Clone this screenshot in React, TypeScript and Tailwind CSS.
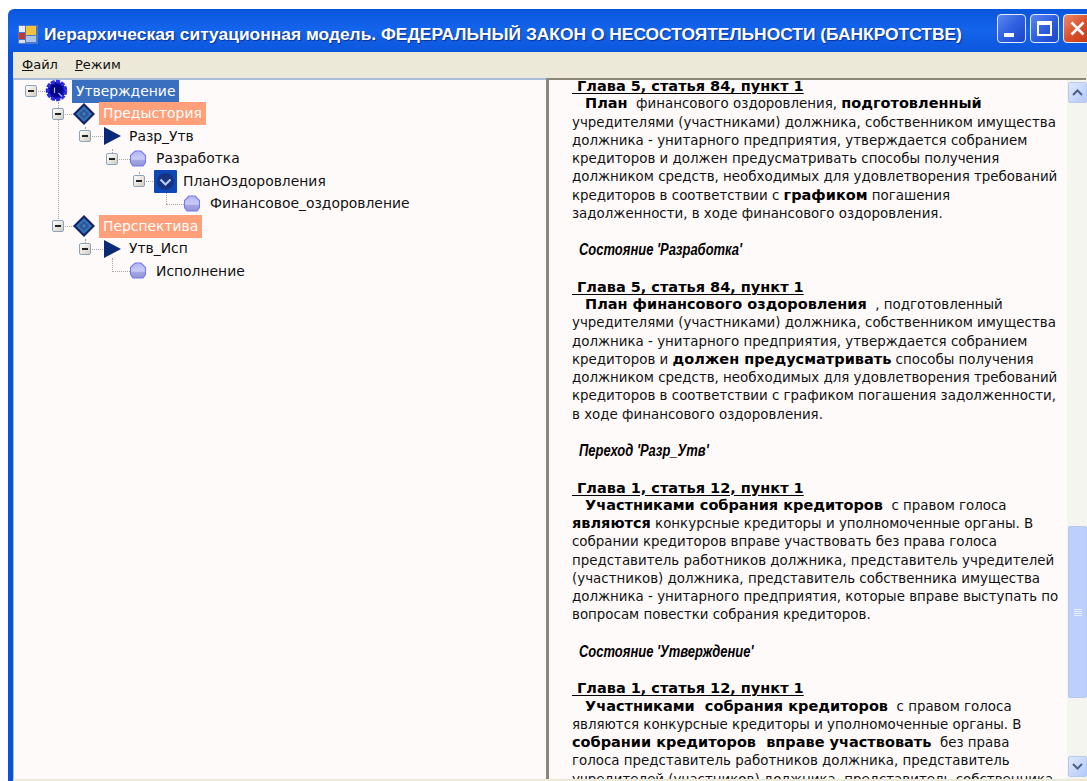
import type { ReactNode } from 'react'

type NodeKind = 'root' | 'diamond' | 'play' | 'ball' | 'chevron'

type TreeNode = {
  label: string
  kind: NodeKind
  tag?: 'selected' | 'peach'
  up?: number
  children?: TreeNode[]
}

const TREE: TreeNode = {
  label: 'Утверждение',
  kind: 'root',
  tag: 'selected',
  children: [
    {
      label: 'Предыстория',
      kind: 'diamond',
      tag: 'peach',
      up: 12,
      children: [
        {
          label: 'Разр_Утв',
          kind: 'play',
          up: 10,
          children: [
            {
              label: 'Разработка',
              kind: 'ball',
              up: 10,
              children: [
                {
                  label: 'ПланОздоровления',
                  kind: 'chevron',
                  up: 10,
                  children: [{ label: 'Финансовое_оздоровление', kind: 'ball', up: 14 }],
                },
              ],
            },
          ],
        },
      ],
    },
    {
      label: 'Перспектива',
      kind: 'diamond',
      tag: 'peach',
      up: 112,
      children: [
        {
          label: 'Утв_Исп',
          kind: 'play',
          up: 10,
          children: [{ label: 'Исполнение', kind: 'ball', up: 14 }],
        },
      ],
    },
  ],
}

function NodeIcon({ kind }: { kind: NodeKind }) {
  if (kind === 'root') {
    return (
      <svg width="24" height="24" viewBox="0 0 24 24">
        <circle cx="11.500" cy="11.500" r="9" fill="#0808b0" stroke="#2c2cdc" strokeWidth="3.500" strokeDasharray="4 1.200" />
        <circle cx="11" cy="11" r="6" fill="#04047e" />
        <path d="M9.500 8.500v5.500M13.500 14l3.500 3.500" stroke="#aebcf0" strokeWidth="1.200" fill="none" />
      </svg>
    )
  }
  if (kind === 'diamond') {
    return (
      <svg width="24" height="24" viewBox="0 0 24 24">
        <path d="M12 1l11 11-11 11L1 12z" fill="#16206c" />
        <path d="M12 4l8 8-8 8-8-8z" fill="#2d78ae" />
        <path d="M12 7l5 5-5 5-5-5z" fill="#35509f" />
        <path d="M12 10l2 2-2 2-2-2z" fill="#3a86b8" />
      </svg>
    )
  }
  if (kind === 'play') {
    return (
      <svg width="24" height="18" viewBox="0 0 24 18">
        <path d="M5 0l17 9-17 9z" fill="#0a2a78" />
      </svg>
    )
  }
  if (kind === 'ball') {
    return (
      <svg width="18" height="18" viewBox="0 0 18 18">
        <defs>
          <linearGradient id="ball-shade" x1="0" y1="0" x2="0" y2="1">
            <stop offset="0" stopColor="#b4b7f2" />
            <stop offset="0.55" stopColor="#c9cbf6" />
            <stop offset="0.62" stopColor="#a2a6e2" />
            <stop offset="1" stopColor="#9296da" />
          </linearGradient>
        </defs>
        <path d="M6 1h6l4.500 4.500v7L14 16H4l-2.500-3.500v-7z" fill="url(#ball-shade)" stroke="#7579e8" strokeWidth="1.100" />
      </svg>
    )
  }
  return (
    <svg width="23" height="23" viewBox="0 0 23 23">
      <rect width="23" height="23" rx="1" fill="#0e48b8" />
      <circle cx="11.500" cy="11.500" r="8.500" fill="#17327f" />
      <path d="M6.500 9.500l5 5 5-5" fill="none" stroke="#b5cdf0" strokeWidth="2.200" />
    </svg>
  )
}

function TreeRow({ node }: { node: TreeNode }) {
  return (
    <div>
      <div className="relative flex h-[22.500px] items-center">
        {node.up ? (
          <span
            className="absolute bottom-[11px] left-[6px] border-l border-dotted border-[#a8a8a0]"
            style={{ height: node.up }}
          />
        ) : null}
        <span className="absolute left-[6px] top-[11px] w-[18px] border-t border-dotted border-[#a8a8a0]" />
        {node.children ? (
          <span className="relative z-10 flex h-[12px] w-[12px] items-center justify-center rounded-[2px] border border-[#8ba3bd] bg-gradient-to-br from-white to-[#d3cdbd]">
            <span className="h-[2px] w-[6px] bg-[#222]" />
          </span>
        ) : (
          <span className="w-[12px]" />
        )}
        <span className="relative z-10 ml-[8px] flex w-[24px] justify-center">
          <NodeIcon kind={node.kind} />
        </span>
        {node.tag === 'selected' && (
          <span className="ml-[3px] flex h-[23px] items-center bg-[#3a6ebf] px-[4px] text-white">{node.label}</span>
        )}
        {node.tag === 'peach' && (
          <span className="ml-[3px] flex h-[23px] items-center bg-[#ffa07a] px-[4px] text-white">{node.label}</span>
        )}
        {!node.tag && <span className="ml-[6px] whitespace-nowrap text-[#111]">{node.label}</span>}
      </div>
      {node.children && (
        <div className="pl-[27px]">
          {node.children.map((child) => (
            <TreeRow key={child.label} node={child} />
          ))}
        </div>
      )}
    </div>
  )
}

const B = ({ children }: { children: ReactNode }) => (
  <b className="text-[14.500px] leading-none font-bold text-black">{children}</b>
)

function Heading({ children }: { children: ReactNode }) {
  return <div className="text-[14.500px] font-bold text-black underline underline-offset-2">&nbsp;{children}</div>
}

// the narrow bold italic face is not installed, so the regular one is squeezed
function StateTitle({ children }: { children: ReactNode }) {
  return (
    <div className="my-[18.250px] h-[18.250px] pl-[7px]">
      <span className="inline-block origin-left scale-x-[0.81] font-['Liberation_Sans',Arial,sans-serif] text-[16px] font-bold italic text-black">
        {children}
      </span>
    </div>
  )
}

function ArticleText() {
  return (
    <div className="mt-[-3px] whitespace-nowrap text-[13.400px] leading-[18.250px] text-[#111]">
      <Heading>Глава 5, статья 84, пункт 1</Heading>
      <div className="pl-[13px]"><B>План</B>&nbsp; финансового оздоровления, <B>подготовленный</B></div>
      <div>учредителями (участниками) должника, собственником имущества</div>
      <div>должника - унитарного предприятия, утверждается собранием</div>
      <div>кредиторов и должен предусматривать способы получения</div>
      <div>должником средств, необходимых для удовлетворения требований</div>
      <div>кредиторов в соответствии с <B>графиком</B> погашения</div>
      <div>задолженности, в ходе финансового оздоровления.</div>
      <StateTitle>Состояние 'Разработка'</StateTitle>
      <Heading>Глава 5, статья 84, пункт 1</Heading>
      <div className="pl-[13px]"><B>План финансового оздоровления</B>&nbsp;&nbsp;, подготовленный</div>
      <div>учредителями (участниками) должника, собственником имущества</div>
      <div>должника - унитарного предприятия, утверждается собранием</div>
      <div>кредиторов и <B>должен предусматривать</B> способы получения</div>
      <div>должником средств, необходимых для удовлетворения требований</div>
      <div>кредиторов в соответствии с графиком погашения задолженности,</div>
      <div>в ходе финансового оздоровления.</div>
      <StateTitle>Переход 'Разр_Утв'</StateTitle>
      <Heading>Глава 1, статья 12, пункт 1</Heading>
      <div className="pl-[13px]"><B>Участниками собрания кредиторов</B>&nbsp; с правом голоса</div>
      <div><B>являются</B> конкурсные кредиторы и уполномоченные органы. В</div>
      <div>собрании кредиторов вправе участвовать без права голоса</div>
      <div>представитель работников должника, представитель учредителей</div>
      <div>(участников) должника, представитель собственника имущества</div>
      <div>должника - унитарного предприятия, которые вправе выступать по</div>
      <div>вопросам повестки собрания кредиторов.</div>
      <StateTitle>Состояние 'Утверждение'</StateTitle>
      <Heading>Глава 1, статья 12, пункт 1</Heading>
      <div className="pl-[13px]"><B>Участниками&nbsp; собрания кредиторов</B>&nbsp; с правом голоса</div>
      <div>являются конкурсные кредиторы и уполномоченные органы. В</div>
      <div><B>собрании кредиторов&nbsp; вправе участвовать</B>&nbsp; без права</div>
      <div>голоса представитель работников должника, представитель</div>
      <div>учредителей (участников) должника, представитель собственника</div>
    </div>
  )
}

function ScrollArrow({ down }: { down?: boolean }) {
  return (
    <div className="flex h-[21px] w-[19px] shrink-0 items-center justify-center rounded-[2px] border border-[#b6c9f5] bg-gradient-to-br from-[#dfe9fd] to-[#b5c9f7]">
      <svg width="11" height="7" viewBox="0 0 11 7">
        <path d={down ? 'M1 1l4.500 4.500L10 1' : 'M1 6l4.500-4.500L10 6'} fill="none" stroke="#4d6185" strokeWidth="2" />
      </svg>
    </div>
  )
}

function CaptionButton({ children, close }: { children: ReactNode; close?: boolean }) {
  return (
    <div
      className={`flex h-[29px] w-[29px] shrink-0 items-center justify-center rounded-[4px] border border-[#e4ecfb] ${
        close
          ? 'bg-gradient-to-br from-[#e98a6c] via-[#d9512a] to-[#c23a12]'
          : 'bg-gradient-to-br from-[#5a86ee] via-[#2f5fe0] to-[#1a45c8]'
      }`}
    >
      {children}
    </div>
  )
}

export default function App() {
  return (
    <div className="h-[781px] w-[1087px] overflow-hidden bg-white pl-[8px] pt-[9px] font-['DejaVu_Sans',Verdana,sans-serif]">
      <div className="flex h-[772px] w-[1100px] flex-col">
        {/* caption */}
        <div className="flex h-[43px] shrink-0 items-center rounded-tl-[6px] bg-gradient-to-b from-[#0a56dc] via-[#1464ec] to-[#0c56dc] pl-[10px] pt-[8px]">
          <svg width="20" height="19" viewBox="0 0 20 19" className="shrink-0">
            <rect width="20" height="19" fill="#4f78c8" />
            <rect x="8" y="1" width="10" height="9" fill="#f2c23c" />
            <rect x="1" y="8" width="6" height="6" fill="#c8352a" />
            <rect x="1" y="1" width="6" height="6" fill="#e8edf8" />
            <rect x="8" y="11" width="10" height="6" fill="#a8c4ec" />
            <rect x="1" y="15" width="6" height="3" fill="#d8dfe8" />
          </svg>
          <span className="ml-[6px] w-[938px] shrink-0 whitespace-nowrap font-['Liberation_Sans',Arial,sans-serif] text-[17.400px] font-bold text-white [text-shadow:1px_1px_1px_#0a2f90]">
            Иерархическая ситуационная модель. ФЕДЕРАЛЬНЫЙ ЗАКОН О НЕСОСТОЯТЕЛЬНОСТИ (БАНКРОТСТВЕ)
          </span>
          <div className="ml-[15px] mt-[-12px] flex shrink-0 gap-[4px]">
            <CaptionButton>
              <span className="mr-[6px] mt-[12px] h-[4px] w-[10px] bg-white" />
            </CaptionButton>
            <CaptionButton>
              <span className="h-[15px] w-[15px] border-2 border-t-4 border-white" />
            </CaptionButton>
            <CaptionButton close>
              <svg width="15" height="15" viewBox="0 0 15 15">
                <path d="M1.500 1.500l12 12M13.500 1.500l-12 12" stroke="#fff" strokeWidth="2.600" />
              </svg>
            </CaptionButton>
          </div>
        </div>

        <div className="flex min-h-0 flex-1 border-l-[5px] border-[#0a50dc]">
          <div className="flex min-w-0 flex-1 flex-col bg-[#ece9d8]">
            {/* menu strip */}
            <div className="flex h-[26px] shrink-0 items-center gap-[17px] pl-[9px] text-[13px] text-[#111]">
              <span><u>Ф</u>айл</span>
              <span><u>Р</u>ежим</span>
            </div>

            <div className="flex h-[701px] shrink-0">
              {/* tree pane */}
              <div className="w-[533px] shrink-0 border-l border-t-2 border-[#a9bcdc] bg-[#fffafa] pl-[11px] text-[13.900px]">
                <TreeRow node={TREE} />
              </div>

              {/* article pane */}
              <div className="flex w-[540px] shrink-0 border-l-[3px] border-t-2 border-[#8a8778] bg-[#fffafa]">
                <div className="w-[518px] shrink-0 overflow-hidden pl-[23px]">
                  <ArticleText />
                </div>
                <div className="flex w-[20px] shrink-0 flex-col items-end bg-[#f5f5f0] py-[2px]">
                  <ScrollArrow />
                  <div className="mt-[423px] flex h-[172px] w-[19px] shrink-0 flex-col items-center justify-center gap-[1px] rounded-[2px] border border-[#b6c9f5] bg-[#bcd0fb]">
                    <span className="h-px w-[8px] bg-[#e6eefd]" />
                    <span className="h-px w-[8px] bg-[#e6eefd]" />
                    <span className="h-px w-[8px] bg-[#e6eefd]" />
                    <span className="h-px w-[8px] bg-[#e6eefd]" />
                  </div>
                  <div className="mt-auto">
                    <ScrollArrow down />
                  </div>
                </div>
              </div>
            </div>
          </div>
        </div>
      </div>
    </div>
  )
}
